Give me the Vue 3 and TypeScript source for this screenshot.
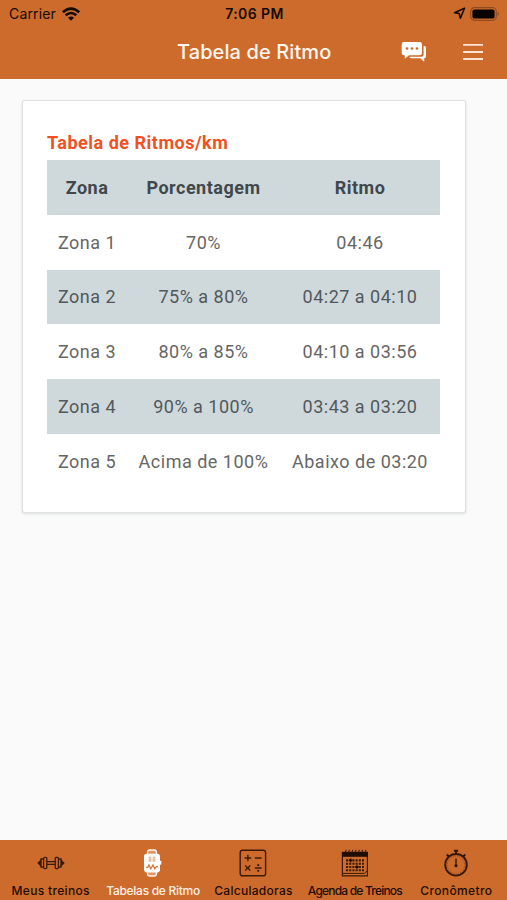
<script setup lang="ts">
interface Zone { name: string; percent: string; pace: string }

const zones: Zone[] = [
  { name: 'Zona 1', percent: '70%', pace: '04:46' },
  { name: 'Zona 2', percent: '75% a 80%', pace: '04:27 a 04:10' },
  { name: 'Zona 3', percent: '80% a 85%', pace: '04:10 a 03:56' },
  { name: 'Zona 4', percent: '90% a 100%', pace: '03:43 a 03:20' },
  { name: 'Zona 5', percent: 'Acima de 100%', pace: 'Abaixo de 03:20' },
]
</script>

<template>
  <div class="screen">
    <header class="top">
      <div class="status">
        <div class="status-left">
          <span class="carrier">Carrier</span>
          <svg class="wifi" width="18" height="14" viewBox="0 0 18 14">
            <g fill="none" stroke="#130a05" stroke-width="2.6">
              <path d="M.8 5.2Q9-2 17.2 5.2" />
              <path d="M3.7 8.3Q9 3.7 14.3 8.3" />
            </g>
            <path d="M6 10.7Q9 8.2 12 10.7L9 13.8Z" fill="#130a05" />
          </svg>
        </div>
        <span class="clock">7:06 PM</span>
        <div class="status-right">
          <svg width="13" height="13" viewBox="0 0 13 13">
            <path d="M11.5 1.3L1.5 5.8L6.2 6.5L7.4 11.3Z" fill="none" stroke="#130a05" stroke-width="1.5" stroke-linejoin="round" />
          </svg>
          <svg width="30" height="14" viewBox="0 0 30 14">
            <rect x=".7" y=".7" width="25.6" height="12.6" rx="3.8" fill="none" stroke="#8f4c22" stroke-width="1.2" />
            <rect x="2.4" y="2.4" width="22.2" height="9.2" rx="2.2" fill="#080300" />
            <path d="M27.6 4.8Q30.4 7 27.6 9.2Z" fill="#8f4c22" />
          </svg>
        </div>
      </div>
      <div class="toolbar">
        <h1>Tabela de Ritmo</h1>
        <svg class="chat" width="26" height="22" viewBox="0 0 26 22">
          <path d="M22.6 5H23.2Q25 5 25 7V15.4Q25 17.2 23.2 17.2V20.8L19.2 17.2H10.2Q8.7 17.2 8.4 15.8H20.2Q22.6 15.8 22.6 13.4Z" fill="#fff" />
          <path d="M3 1H18.6Q21 1 21 3.4V12Q21 14.2 18.6 14.2H8L3.8 17.8V14.2H3Q.7 14.2 .7 12V3.4Q.7 1 3 1Z" fill="#fff" />
          <g fill="#cd6b2c"><circle cx="6" cy="7.5" r="1.35" /><circle cx="11" cy="7.5" r="1.35" /><circle cx="16" cy="7.5" r="1.35" /></g>
        </svg>
        <svg class="menu" width="20" height="18" viewBox="0 0 20 18">
          <path d="M0 1.8H20M0 9H20M0 16H20" stroke="#fbe4d5" stroke-width="1.8" />
        </svg>
      </div>
    </header>

    <main>
      <section class="card">
        <h2>Tabela de Ritmos/km</h2>
        <table>
          <colgroup><col class="c1"><col class="c2"><col class="c3"></colgroup>
          <thead>
            <tr><th>Zona</th><th>Porcentagem</th><th>Ritmo</th></tr>
          </thead>
          <tbody>
            <tr v-for="z in zones" :key="z.name">
              <td>{{ z.name }}</td><td>{{ z.percent }}</td><td>{{ z.pace }}</td>
            </tr>
          </tbody>
        </table>
      </section>
    </main>

    <nav>
      <a class="tab workouts">
        <svg width="30" height="30" viewBox="0 0 30 30" fill="none" stroke="#3c1b08" stroke-width="1.3">
          <path d="M11 13.7H19M11 16.3H19" />
          <rect x="7.6" y="9.4" width="3.2" height="11.2" rx="1" />
          <rect x="19.2" y="9.4" width="3.2" height="11.2" rx="1" />
          <path d="M7.4 11H5V19H7.4M22.6 11H25V19H22.6" />
          <path d="M4.5 12.6L2.2 15L4.5 17.4ZM25.5 12.6L27.8 15L25.5 17.4Z" fill="#3c1b08" />
        </svg>
        <span>Meus treinos</span>
      </a>
      <a class="tab pace">
        <svg width="30" height="30" viewBox="0 0 30 30">
          <path d="M10.5 7V4.3Q10.5 2 12.8 2H17.2Q19.5 2 19.5 4.3V7M10.5 23V25.7Q10.5 28 12.8 28H17.2Q19.5 28 19.5 25.7V23" fill="#df9668" stroke="#fff3e9" stroke-width="1.3" />
          <rect x="7" y="5.8" width="16" height="18.6" rx="2.8" fill="#fff" />
          <rect x="22.5" y="12.8" width="1.8" height="4" rx=".8" fill="#fff" />
          <path d="M11.7 9.3H14.4M15.6 9.3H18.4M11.7 11.1H14.4M15.6 11.1H18.4M11.7 12.9H14.4M15.6 12.9H18.4" stroke="#dca17c" stroke-width="1.1" />
          <path d="M9 19.3H10.8L12 17L13.8 20.8L16 17L17.8 20.8L19.3 18.6H21" fill="none" stroke="#d37a42" stroke-width="1.3" />
        </svg>
        <span>Tabelas de Ritmo</span>
      </a>
      <a class="tab calculators">
        <svg width="30" height="30" viewBox="0 0 30 30" fill="none" stroke="#3c1b08" stroke-width="1.4">
          <rect x="2.2" y="2.2" width="25.4" height="25.6" rx="2.4" />
          <path d="M6.6 10H13.2M9.9 6.7V13.3M16.8 10H23.6M7.2 17.4L12.3 22.4M12.3 17.4L7.2 22.4M16.8 20H23.6" />
          <g fill="#3c1b08" stroke="none"><circle cx="20.2" cy="17.2" r="1.1" /><circle cx="20.2" cy="22.8" r="1.1" /></g>
        </svg>
        <span>Calculadoras</span>
      </a>
      <a class="tab agenda">
        <svg width="30" height="30" viewBox="0 0 30 30">
          <path d="M2.4 4.3H27.4V27.8H2.4Z" fill="none" stroke="#3c1b08" stroke-width="1.2" />
          <path d="M2 4H28V8.8H2Z" fill="#200e04" />
          <path d="M5 5L6.2 1.8M8.3 5L9.5 1.8M11.6 5L12.8 1.8M14.9 5L16.1 1.8M18.2 5L19.4 1.8M21.5 5L22.7 1.8M24.8 5L26 1.8" stroke="#301406" />
          <path d="M2.8 25.4H24.4L27 22.8" fill="none" stroke="#3c1b08" />
          <path d="M6 12.4H24M6 15.7H24M6 19H24M6 22.3H24" stroke="#3c1b08" stroke-width="2.1" stroke-dasharray="2.1 1.1" />
          <path d="M8.8 12.4H12.4M10.6 10.6V14.2M15.2 19H18.8M17 17.2V20.8" stroke="#200e04" stroke-width="1.4" />
        </svg>
        <span>Agenda de Treinos</span>
      </a>
      <a class="tab timer">
        <svg width="30" height="30" viewBox="0 0 30 30" fill="none" stroke="#371807">
          <circle cx="15" cy="16.8" r="10.8" stroke-width="1.9" />
          <circle cx="15" cy="16.8" r="8.7" stroke-width=".7" stroke-dasharray=".6 1.6" />
          <path d="M15 3V6M12.9 2.8H17.1M5.8 6.5L8 8.7M24.2 6.5L22 8.7" stroke-width="2" />
          <path d="M15 10.5V17" stroke-width="1.4" />
          <circle cx="15" cy="17.7" r="1.2" fill="#371807" />
        </svg>
        <span>Cronômetro</span>
      </a>
    </nav>
  </div>
</template>

<style>
body { margin: 0; }
</style>

<style scoped>
.screen {
  display: flex;
  flex-direction: column;
  height: 900px;
  background: #fafafa;
  font-family: Roboto, "Liberation Sans", sans-serif;
  overflow: hidden;
}
.top {
  box-sizing: border-box;
  height: 79px;
  background: #cd6b2c;
  flex: none;
}
.status {
  display: grid;
  grid-template-columns: 1fr auto 1fr;
  align-items: center;
  height: 27px;
  padding: 0 7px 0 9px;
  color: #130a05;
  font-family: Inter, sans-serif;
  font-size: 14px;
}
.status-left { display: flex; align-items: center; gap: 6px; }
.carrier { letter-spacing: .15px; }
.clock { font-weight: 600; letter-spacing: .4px; }
.status-right { display: flex; align-items: center; justify-content: flex-end; gap: 4px; }
.toolbar {
  display: grid;
  grid-template-columns: 177px 224px 62px 20px;
  align-items: center;
  height: 50px;
}
h1 {
  grid-column: 2;
  margin: 0;
  color: #fff6ee;
  font: 500 20px/26px Inter, sans-serif;
  letter-spacing: .1px;
  white-space: nowrap;
}
main { flex: 1; padding: 22px 42px 0 23px; }
.card {
  box-sizing: border-box;
  height: 411px;
  padding: 30px 25px 0 24px;
  background: #fff;
  border-radius: 2px;
  box-shadow: 0 0 0 1px #e0e1e1, 0 1px 3px 1px #dcdddd;
}
h2 {
  margin: 0 0 5px;
  height: 24px;
  color: #f2501f;
  font-size: 18px;
  line-height: 24px;
  font-weight: 700;
  letter-spacing: .5px;
  white-space: nowrap;
}
table {
  width: 393px;
  border-collapse: collapse;
  table-layout: fixed;
  text-align: center;
  font-size: 18px;
  letter-spacing: .5px;
  color: #666;
}
.c1 { width: 79px; }
.c2 { width: 154px; }
.c3 { width: 160px; }
th, td { height: 53.75px; padding: 1px 0 0 1px; line-height: 24px; white-space: nowrap; }
th:last-child, td:last-child { padding-left: 0; }
th { font-weight: 700; color: #41484b; }
thead tr, tbody tr:nth-child(even) { background: #cfd8db; }
tbody tr:nth-child(even) { color: #51595c; }
nav {
  display: grid;
  grid-template-columns: repeat(5, minmax(0, 1fr));
  height: 60px;
  background: #cd6b2c;
  flex: none;
}
.tab {
  display: flex;
  flex-direction: column;
  align-items: center;
  padding-top: 8px;
  color: #1d0c03;
  font: 500 12px/16px Inter, sans-serif;
  white-space: nowrap;
}
.tab svg { flex: none; margin-bottom: 5px; }
.workouts { letter-spacing: .33px; }
.pace { color: #fff0e4; letter-spacing: -.28px; }
.pace span { margin-left: 2px; }
.calculators { letter-spacing: .28px; }
.agenda { letter-spacing: -.8px; }
.timer { letter-spacing: .38px; }
</style>
